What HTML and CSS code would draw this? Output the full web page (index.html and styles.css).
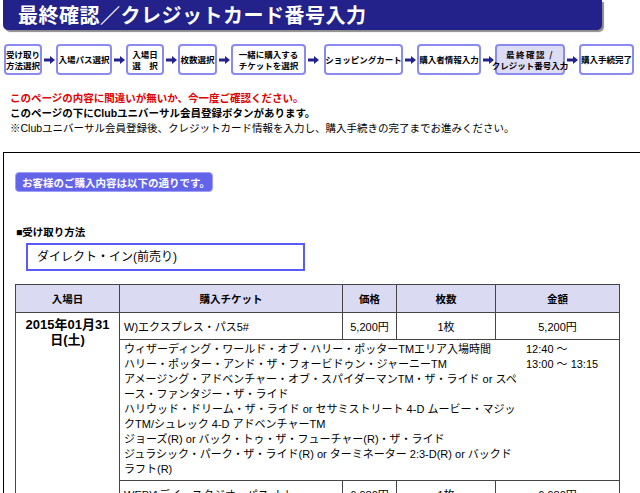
FILE: index.html
```html
<!DOCTYPE html>
<html lang="ja">
<head>
<meta charset="utf-8">
<title>最終確認／クレジットカード番号入力</title>
<link rel="stylesheet" href="styles.css">
</head>
<body>
<div class="title"><h1>最終確認／クレジットカード番号入力</h1></div>

<div class="steps">
  <div class="step w1"><span>受け取り</span><span>方法選択</span></div>
  <div class="arrow"><svg width="11" height="8" viewBox="0 0 11 8"><path d="M0 2.5h6V0l5 4-5 4V5.5H0z" fill="#22228a"/></svg></div>
  <div class="step w2"><span>入場パス選択</span></div>
  <div class="arrow"><svg width="11" height="8" viewBox="0 0 11 8"><path d="M0 2.5h6V0l5 4-5 4V5.5H0z" fill="#22228a"/></svg></div>
  <div class="step w3"><span>入場日</span><span>選　択</span></div>
  <div class="arrow"><svg width="11" height="8" viewBox="0 0 11 8"><path d="M0 2.5h6V0l5 4-5 4V5.5H0z" fill="#22228a"/></svg></div>
  <div class="step w4"><span>枚数選択</span></div>
  <div class="arrow"><svg width="11" height="8" viewBox="0 0 11 8"><path d="M0 2.5h6V0l5 4-5 4V5.5H0z" fill="#22228a"/></svg></div>
  <div class="step w5"><span>一緒に購入する</span><span>チケットを選択</span></div>
  <div class="arrow"><svg width="11" height="8" viewBox="0 0 11 8"><path d="M0 2.5h6V0l5 4-5 4V5.5H0z" fill="#22228a"/></svg></div>
  <div class="step w6"><span>ショッピングカート</span></div>
  <div class="arrow"><svg width="11" height="8" viewBox="0 0 11 8"><path d="M0 2.5h6V0l5 4-5 4V5.5H0z" fill="#22228a"/></svg></div>
  <div class="step w7"><span>購入者情報入力</span></div>
  <div class="arrow"><svg width="11" height="8" viewBox="0 0 11 8"><path d="M0 2.5h6V0l5 4-5 4V5.5H0z" fill="#22228a"/></svg></div>
  <div class="step w8 current"><span class="spaced">最終確認 /</span><span>クレジット番号入力</span></div>
  <div class="arrow"><svg width="11" height="8" viewBox="0 0 11 8"><path d="M0 2.5h6V0l5 4-5 4V5.5H0z" fill="#22228a"/></svg></div>
  <div class="step w9"><span>購入手続完了</span></div>
</div>

<div class="notice">
  <p class="red">このページの内容に間違いが無いか、今一度ご確認ください。</p>
  <p class="bold">このページの下にClubユニバーサル会員登録ボタンがあります。</p>
  <p>※Clubユニバーサル会員登録後、クレジットカード情報を入力し、購入手続きの完了までお進みください。</p>
</div>

<div class="main">
  <div class="badge">お客様のご購入内容は以下の通りです。</div>
  <div class="section-title">■受け取り方法</div>
  <div class="method">ダイレクト・イン(前売り)</div>

  <table class="order">
    <colgroup>
      <col class="c-date"><col class="c-ticket"><col class="c-price"><col class="c-qty"><col class="c-amount">
    </colgroup>
    <thead>
      <tr><th>入場日</th><th>購入チケット</th><th>価格</th><th>枚数</th><th>金額</th></tr>
    </thead>
    <tbody>
      <tr class="item">
        <td class="date" rowspan="3">2015年01月31日(土)</td>
        <td class="ticket">W)エクスプレス・パス5#</td>
        <td class="price">5,200円</td>
        <td class="center">1枚</td>
        <td class="center">5,200円</td>
      </tr>
      <tr>
        <td class="detail" colspan="4">
          <div class="slots">
            <span>ウィザーディング・ワールド・オブ・ハリー・ポッターTMエリア入場時間</span><span>12:40 〜</span>
            <span>ハリー・ポッター・アンド・ザ・フォービドゥン・ジャーニーTM</span><span>13:00 〜 13:15</span>
            <span>アメージング・アドベンチャー・オブ・スパイダーマンTM・ザ・ライド or スペース・ファンタジー・ザ・ライド</span><span></span>
            <span>ハリウッド・ドリーム・ザ・ライド or セサミストリート 4-D ムービー・マジックTM/シュレック 4-D アドベンチャーTM</span><span></span>
            <span>ジョーズ(R) or バック・トゥ・ザ・フューチャー(R)・ザ・ライド</span><span></span>
            <span>ジュラシック・パーク・ザ・ライド(R) or ターミネーター 2:3-D(R) or バックドラフト(R)</span><span></span>
          </div>
        </td>
      </tr>
      <tr class="item">
        <td class="ticket">WEB)1デイ・スタジオ・パス ナト</td>
        <td class="price">6,980円</td>
        <td class="center">1枚</td>
        <td class="center">6,980円</td>
      </tr>
    </tbody>
  </table>
</div>
</body>
</html>
```

FILE: styles.css
```css
html {
  overflow: hidden;
}

body {
  margin: 0;
  width: 700px;
  background: #fff;
  color: #000;
  font-family: "Liberation Sans", "Noto Sans CJK JP", sans-serif;
}

.title {
  margin-left: 3px;
  width: 599px;
  height: 30px;
  box-sizing: border-box;
  padding-left: 15px;
  display: flex;
  align-items: center;
  background: #22228a;
  border-radius: 0 0 5px 5px;
  box-shadow: 2px 2px 1px #8c8c8c;
}

.title h1 {
  margin: 0;
  color: #fff;
  font-family: "Noto Sans CJK JP", sans-serif;
  font-size: 20px;
  font-weight: bold;
  line-height: 24px;
  letter-spacing: 0.5px;
}

.steps {
  display: flex;
  align-items: center;
  margin: 14px 0 0 4px;
  height: 31px;
}

.step {
  box-sizing: border-box;
  height: 31px;
  border: 2px solid #8a8af0;
  border-radius: 4px;
  background: #fff;
  display: flex;
  flex-direction: column;
  align-items: center;
  justify-content: center;
  font-family: "Noto Sans CJK JP", sans-serif;
  font-size: 8.5px;
  font-weight: bold;
  line-height: 10.5px;
  white-space: nowrap;
}

.step.current {
  background: #dcdcf4;
}

.spaced {
  letter-spacing: 1.5px;
}

.w1 { width: 38px; }
.w2 { width: 56px; }
.w3 { width: 38px; }
.w4 { width: 39px; }
.w5 { width: 75px; }
.w6 { width: 79px; margin-left: 4px; }
.w7 { width: 64px; }
.w8 { width: 70px; }
.w9 { width: 55px; }

.arrow {
  width: 14px;
  display: flex;
  justify-content: center;
  align-items: center;
}

.arrow svg {
  display: block;
}

.notice {
  margin: 16px 0 0 10px;
  font-size: 10.5px;
  line-height: 15px;
}

.notice p {
  margin: 0;
}

.red {
  color: #e00000;
  font-weight: bold;
}

.bold {
  font-weight: bold;
}

.main {
  margin: 16px 0 0 3px;
  width: 690px;
  border: 1px solid #000;
  padding: 19px 0 40px 11px;
}

.badge {
  box-sizing: border-box;
  width: 198px;
  height: 20px;
  display: flex;
  align-items: center;
  padding-left: 6px;
  background: #6464ea;
  border: 1px solid #a0a0fa;
  border-radius: 4px;
  color: #fff;
  font-size: 10.5px;
  font-weight: bold;
}

.section-title {
  margin-top: 33px;
  padding-left: 1px;
  font-size: 10.5px;
  font-weight: bold;
  line-height: 15px;
}

.method {
  box-sizing: border-box;
  margin: 3px 0 0 11px;
  width: 279px;
  height: 28px;
  padding-left: 9px;
  border: 2px solid #5a5af5;
  font-size: 12px;
  line-height: 24px;
}

.order {
  margin-top: 13px;
  border-collapse: collapse;
  table-layout: fixed;
  width: 604px;
  font-size: 11px;
}

.c-date { width: 104px; }
.c-ticket { width: 223px; }
.c-price { width: 54px; }
.c-qty { width: 99px; }
.c-amount { width: 124px; }

.order th,
.order td {
  border: 1px solid #444;
  padding: 0 4px;
}

.order th {
  height: 27px;
  background: #dadaf2;
  font-size: 10.5px;
  font-weight: bold;
  text-align: center;
}

.order .item td {
  height: 26px;
}

.order td.date {
  vertical-align: top;
  text-align: center;
  padding: 4px 4px 0;
  font-size: 13px;
  font-weight: bold;
  line-height: 15px;
}

.order td.ticket {
  text-align: left;
}

.order td.price {
  text-align: center;
}

.order td.center {
  text-align: center;
}

.order td.detail {
  padding: 2px 4px 3px;
}

.slots {
  display: grid;
  grid-template-columns: 396px auto;
  column-gap: 6px;
  line-height: 15px;
}
```
